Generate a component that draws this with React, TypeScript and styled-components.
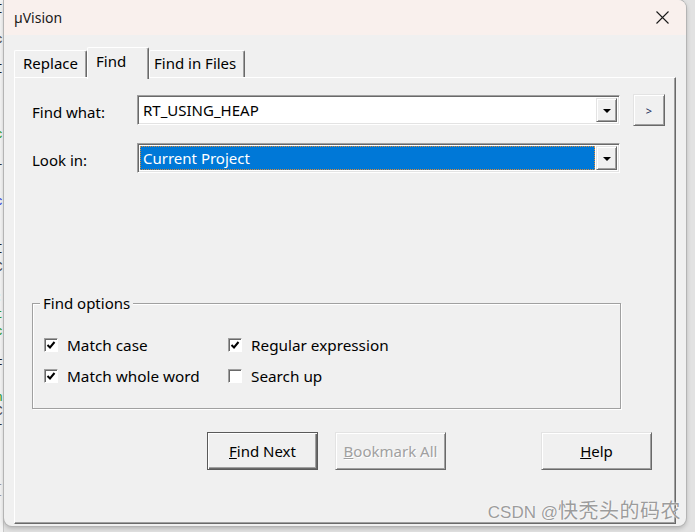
import React from "react";
import styled, { createGlobalStyle } from "styled-components";

const GlobalStyle = createGlobalStyle`
  html, body { margin: 0; padding: 0; }
  body { background: #dedede; font-family: "Noto Sans", "Open Sans", sans-serif; }
  * { box-sizing: border-box; }
`;

const Screen = styled.div`
  width: 695px;
  height: 532px;
  display: flex;
  align-items: flex-start;
  overflow: hidden;
  background: #e2e2e2;
`;

const CodeStrip = styled.div`
  width: 4px;
  height: 532px;
  flex: none;
  background: #f4f4f4;
  border-right: 1px solid #c8c8c8;
  overflow: hidden;
  display: flex;
  flex-direction: column;
  font-family: "Liberation Mono", monospace;
  font-size: 13px;
  line-height: 14px;
`;

const CodeChar = styled.span<{ $gap: number; $color: string }>`
  display: block;
  margin-top: ${(p) => p.$gap}px;
  margin-left: -5px;
  color: ${(p) => p.$color};
  height: 14px;
`;

const Window = styled.div`
  position: relative;
  width: 682px;
  height: 526px;
  flex: none;
  display: flex;
  flex-direction: column;
  background: #f0f0f0;
  border-radius: 0 8px 8px 8px;
  box-shadow: 0 0 0 1px #b4b4b4, 0 2px 5px rgba(0, 0, 0, 0.25);
  overflow: hidden;
`;

const TitleBar = styled.div`
  height: 35px;
  flex: none;
  display: flex;
  align-items: center;
  justify-content: space-between;
  padding: 0 17px 0 10px;
  background: #f9f0ed;
  font-size: 14px;
  color: #1a1a1a;
`;

const Body = styled.div`
  display: flex;
  flex-direction: column;
  padding: 12px 0 0 10px;
`;

const TabRow = styled.div`
  display: flex;
  align-items: flex-end;
  height: 30px;
  position: relative;
  z-index: 1;
`;

const Tab = styled.div<{ $active?: boolean; $w: number; $pl: number }>`
  width: ${(p) => p.$w}px;
  height: ${(p) => (p.$active ? 32 : 27)}px;
  margin-bottom: ${(p) => (p.$active ? -2 : 0)}px;
  padding: 0 0 ${(p) => (p.$active ? 6 : 2)}px ${(p) => p.$pl}px;
  display: flex;
  align-items: center;
  font-size: 15px;
  color: #000;
  background: #f0f0f0;
  border-top: 1px solid #fff;
  border-left: 1px solid #fff;
  border-right: 1px solid #696969;
  border-radius: 2px 2px 0 0;
  box-shadow: inset -1px 0 0 #a0a0a0;
`;

const Panel = styled.div`
  width: 662px;
  height: 447px;
  display: flex;
  flex-direction: column;
  padding: 16px 0 0 17px;
  border: 1px solid;
  border-color: #fff #696969 #696969 #fff;
  box-shadow: inset -1px -1px 0 #a0a0a0;
`;

const FieldRow = styled.div<{ $top?: number }>`
  display: flex;
  align-items: center;
  margin-top: ${(p) => p.$top ?? 0}px;
`;

const Label = styled.div`
  width: 105px;
  font-size: 15px;
  color: #000;
  padding-top: 3px;
`;

const Combo = styled.div`
  width: 483px;
  height: 30px;
  display: flex;
  padding: 2px;
  background: #fff;
  border: 1px solid;
  border-color: #a0a0a0 #fff #fff #a0a0a0;
  box-shadow: inset 1px 1px 0 #696969, inset -1px -1px 0 #e3e3e3;
`;

const ComboText = styled.div<{ $selected?: boolean }>`
  flex: 1;
  display: flex;
  align-items: center;
  padding-left: 3px;
  font-size: 15px;
  color: ${(p) => (p.$selected ? "#fff" : "#000")};
  background: ${(p) => (p.$selected ? "#0078d7" : "#fff")};
  outline: ${(p) => (p.$selected ? "1px dotted #d88a3a" : "none")};
  outline-offset: -1px;
  margin-right: 1px;
`;

const DropButton = styled.div`
  width: 21px;
  display: flex;
  align-items: center;
  justify-content: center;
  background: #f0f0f0;
  border: 1px solid;
  border-color: #e3e3e3 #696969 #696969 #e3e3e3;
  box-shadow: inset 1px 1px 0 #fff, inset -1px -1px 0 #a0a0a0;
`;

const Arrow = styled.span`
  width: 0;
  height: 0;
  border-left: 4px solid transparent;
  border-right: 4px solid transparent;
  border-top: 4px solid #000;
  margin-top: 1px;
`;

const MoreButton = styled.div`
  width: 32px;
  height: 32px;
  margin-left: 13px;
  display: flex;
  align-items: center;
  justify-content: center;
  font-size: 11px;
  color: #1a2a5a;
  background: #f0f0f0;
  border: 1px solid;
  border-color: #e3e3e3 #696969 #696969 #e3e3e3;
  box-shadow: inset 1px 1px 0 #fff, inset -1px -1px 0 #a0a0a0;
`;

const GroupBox = styled.div`
  position: relative;
  width: 589px;
  height: 106px;
  margin-top: 130px;
  padding: 31px 0 0 11px;
  border: 1px solid #a0a0a0;
  box-shadow: inset 1px 1px 0 #fff, 1px 1px 0 #fff;
`;

const Legend = styled.div`
  position: absolute;
  top: -12px;
  left: 7px;
  padding: 0 3px;
  background: #f0f0f0;
  font-size: 15px;
  line-height: 22px;
  color: #000;
`;

const CheckGrid = styled.div`
  display: grid;
  grid-template-columns: 184px auto;
  row-gap: 11px;
`;

const CheckItem = styled.label`
  display: flex;
  align-items: center;
  gap: 9px;
  height: 20px;
  font-size: 15.3px;
  color: #000;
`;

const Box = styled.span`
  width: 14px;
  height: 14px;
  flex: none;
  display: flex;
  align-items: center;
  justify-content: center;
  background: #fff;
  border: 1px solid;
  border-color: #a0a0a0 #fff #fff #a0a0a0;
  box-shadow: inset 1px 1px 0 #696969;
`;

const ButtonRow = styled.div`
  display: flex;
  margin-top: 23px;
  padding-left: 175px;
`;

const Btn = styled.div<{ $default?: boolean; $disabled?: boolean; $ml?: number }>`
  width: 111px;
  height: 38px;
  margin-left: ${(p) => p.$ml ?? 0}px;
  display: flex;
  align-items: center;
  justify-content: center;
  font-size: 15px;
  color: ${(p) => (p.$disabled ? "#a0a0a0" : "#000")};
  text-shadow: ${(p) => (p.$disabled ? "1px 1px 0 #fff" : "none")};
  background: #f0f0f0;
  border: 1px solid;
  border-color: ${(p) =>
    p.$default ? "#5a5a5a" : "#e3e3e3 #696969 #696969 #e3e3e3"};
  box-shadow: ${(p) =>
    p.$default
      ? "inset 1px 1px 0 #fff, inset -1px -1px 0 #696969, inset -2px -2px 0 #a0a0a0"
      : "inset 1px 1px 0 #fff, inset -1px -1px 0 #a0a0a0"};
`;

const Watermark = styled.div`
  position: absolute;
  right: 5px;
  bottom: 2px;
  font-family: "Liberation Sans", "Noto Sans CJK SC", sans-serif;
  font-size: 17px;
  color: #9c9c9c;
  text-shadow: 0 0 2px #fff, 0 0 1px #fff;
  white-space: nowrap;
`;

const Cjk = styled.span`
  font-family: "Noto Sans CJK SC", sans-serif;
  font-size: 20px;
  letter-spacing: 0.5px;
`;

const Check = () => (
  <svg width="10" height="10" viewBox="0 0 10 10">
    <path d="M1.5 5 L4 7.5 L8.5 2" fill="none" stroke="#000" strokeWidth="2" />
  </svg>
);

const Close = () => (
  <svg width="13" height="13" viewBox="0 0 13 13">
    <path d="M0.5 0.5 L12.5 12.5 M12.5 0.5 L0.5 12.5" stroke="#1a1a1a" strokeWidth="1.1" />
  </svg>
);

const codeChars: { gap: number; ch: string; color: string }[] = [
  { gap: 3, ch: "I", color: "#222" },
  { gap: 16, ch: "c", color: "#444" },
  { gap: 16, ch: "I", color: "#222" },
  { gap: 51, ch: "c", color: "#2a9a2a" },
  { gap: 19, ch: "r", color: "#333" },
  { gap: 20, ch: "c", color: "#3344dd" },
  { gap: 34, ch: "I", color: "#222" },
  { gap: 4, ch: "C", color: "#333" },
  { gap: 16, ch: ":", color: "#2a9a2a" },
  { gap: 3, ch: "t", color: "#2a9a2a" },
  { gap: 3, ch: "c", color: "#2a9a2a" },
  { gap: 19, ch: "F", color: "#222" },
  { gap: 19, ch: "n", color: "#2a9a2a" },
  { gap: 0, ch: "C", color: "#333" },
  { gap: 2, ch: "r", color: "#333" },
  { gap: 48, ch: "[", color: "#999" },
];

export default function App() {
  return (
    <>
      <GlobalStyle />
      <Screen>
        <CodeStrip>
          {codeChars.map((c, i) => (
            <CodeChar key={i} $gap={c.gap} $color={c.color}>
              {c.ch}
            </CodeChar>
          ))}
        </CodeStrip>
        <Window>
          <TitleBar>
            <span>µVision</span>
            <Close />
          </TitleBar>
          <Body>
            <TabRow>
              <Tab $w={73} $pl={8}>Replace</Tab>
              <Tab $w={62} $pl={8} $active>Find</Tab>
              <Tab $w={96} $pl={4}>Find in Files</Tab>
            </TabRow>
            <Panel>
              <FieldRow>
                <Label>Find what:</Label>
                <Combo>
                  <ComboText>RT_USING_HEAP</ComboText>
                  <DropButton>
                    <Arrow />
                  </DropButton>
                </Combo>
                <MoreButton>&gt;</MoreButton>
              </FieldRow>
              <FieldRow $top={17}>
                <Label>Look in:</Label>
                <Combo>
                  <ComboText $selected>Current Project</ComboText>
                  <DropButton>
                    <Arrow />
                  </DropButton>
                </Combo>
              </FieldRow>
              <GroupBox>
                <Legend>Find options</Legend>
                <CheckGrid>
                  <CheckItem>
                    <Box><Check /></Box>Match case
                  </CheckItem>
                  <CheckItem>
                    <Box><Check /></Box>Regular expression
                  </CheckItem>
                  <CheckItem>
                    <Box><Check /></Box>Match whole word
                  </CheckItem>
                  <CheckItem>
                    <Box />Search up
                  </CheckItem>
                </CheckGrid>
              </GroupBox>
              <ButtonRow>
                <Btn $default>
                  <span><u>F</u>ind Next</span>
                </Btn>
                <Btn $disabled $ml={17}>
                  <span><u>B</u>ookmark All</span>
                </Btn>
                <Btn $ml={95}>
                  <span><u>H</u>elp</span>
                </Btn>
              </ButtonRow>
            </Panel>
          </Body>
          <Watermark>
            CSDN @<Cjk>快秃头的码农</Cjk>
          </Watermark>
        </Window>
      </Screen>
    </>
  );
}
